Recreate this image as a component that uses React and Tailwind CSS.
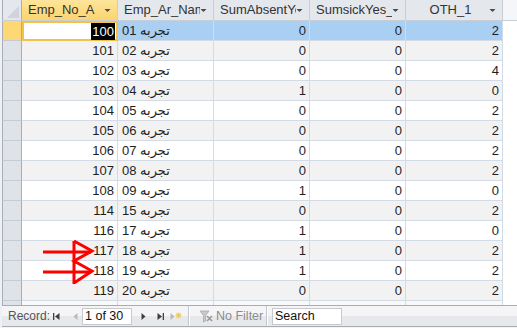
import React from "react";

const rows = [
  ["100", "01", "0", "0", "2"],
  ["101", "02", "0", "0", "2"],
  ["102", "03", "0", "0", "4"],
  ["103", "04", "1", "0", "0"],
  ["104", "05", "0", "0", "2"],
  ["105", "06", "0", "0", "2"],
  ["106", "07", "0", "0", "2"],
  ["107", "08", "0", "0", "2"],
  ["108", "09", "1", "0", "0"],
  ["114", "15", "0", "0", "2"],
  ["116", "17", "1", "0", "0"],
  ["117", "18", "1", "0", "2"],
  ["118", "19", "1", "0", "2"],
  ["119", "20", "0", "0", "2"],
];

const Arrow = () => (
  <svg width="7" height="5" viewBox="0 0 7 5" className="shrink-0">
    <path d="M0.5 1h6L3.5 4z" fill="#4a4a4a" />
  </svg>
);

const HeadCell = ({ label, w = "w-[96px]", center, active }) => (
  <div
    className={`${w} shrink-0 h-full flex items-center border-r border-[#c9ced6] pl-[6px] pr-[6px] ${
      active
        ? "bg-[linear-gradient(#fde59c,#fbd46e)]"
        : "bg-[#e4e7ec]"
    }`}
  >
    <span
      className={`flex-1 overflow-hidden whitespace-nowrap text-[#333] ${
        center ? "text-center" : ""
      }`}
    >
      {label}
    </span>
    <Arrow />
  </div>
);

const Row = ({ r, i }) => {
  const sel = i === 0;
  const bg = sel ? "bg-[#a9cff2]" : i % 2 ? "bg-[#f2f2f2]" : "bg-white";
  const cell = `w-[96px] shrink-0 h-full border-r border-b border-[#d3dbe7] ${bg} flex items-center`;
  return (
    <div className="flex h-[20px]">
      <div
        className={`w-[20px] shrink-0 h-full border-l border-r border-b border-l-[#a9aeb6] border-r-[#a9aeb6] border-b-[#c5cbd4] ${
          sel ? "bg-[#fcd974]" : "bg-[#dfe3e8]"
        }`}
      />
      {sel ? (
        <div className="w-[96px] shrink-0 h-full border-2 border-[#f3c24a] bg-white flex items-center justify-end pr-[1px]">
          <span className="bg-black text-white leading-[17px] px-[1px]">{r[0]}</span>
        </div>
      ) : (
        <div className={`${cell} justify-end pr-[3px]`}>{r[0]}</div>
      )}
      <div className={`${cell} pl-[4px]`}>
        <span dir="ltr">{`${r[1]} تجربه`}</span>
      </div>
      <div className={`${cell} justify-end pr-[3px]`}>{r[2]}</div>
      <div className={`${cell} justify-end pr-[3px]`}>{r[3]}</div>
      <div className={`${cell} w-[97px] justify-end pr-[3px]`}>{r[4]}</div>
      <div className="flex-1 h-full bg-white" />
    </div>
  );
};

export default function App() {
  return (
    <div className="relative w-[517px] h-[328px] overflow-hidden bg-[#eef0f3] pl-[2px] flex flex-col text-[13px] text-[#1e1e1e] font-['Liberation_Sans','DejaVu_Sans',sans-serif]">
      {/* header */}
      <div className="flex h-[21px] border-b border-[#c9ced6] shrink-0">
        <div className="w-[20px] shrink-0 h-full bg-[#e4e7ec] border-l border-r border-[#a9aeb6] flex items-end justify-end p-[2px]">
          <svg width="12" height="12" viewBox="0 0 12 12">
            <path d="M12 0V12H0z" fill="#d0d4da" />
          </svg>
        </div>
        <HeadCell label="Emp_No_A" active />
        <HeadCell label="Emp_Ar_Name" />
        <HeadCell label="SumAbsentYes" />
        <HeadCell label="SumsickYes_" />
        <HeadCell label="OTH_1" w="w-[97px]" center />
        <div className="flex-1 h-full bg-[#f5f6fa]" />
      </div>

      {/* body */}
      {rows.map((r, i) => (
        <Row key={r[0]} r={r} i={i} />
      ))}

      {/* filler */}
      <div className="flex h-[4px] shrink-0">
        <div className="w-[20px] shrink-0 h-full border-l border-r border-[#a9aeb6] bg-[#dfe3e8]" />
        <div className="w-[96px] shrink-0 h-full border-r border-[#d3dbe7] bg-[#f9f9f9]" />
        <div className="w-[96px] shrink-0 h-full border-r border-[#d3dbe7] bg-[#f9f9f9]" />
        <div className="w-[96px] shrink-0 h-full border-r border-[#d3dbe7] bg-[#f9f9f9]" />
        <div className="w-[96px] shrink-0 h-full border-r border-[#d3dbe7] bg-[#f9f9f9]" />
        <div className="w-[97px] shrink-0 h-full border-r border-[#d3dbe7] bg-[#f9f9f9]" />
        <div className="flex-1 h-full bg-white" />
      </div>

      {/* record navigation bar */}
      <div className="flex items-center h-[22px] shrink-0 border-y border-[#a8acb3] bg-[linear-gradient(#f5f5f7_50%,#e7e8eb_50%)] text-[12px]">
        <span className="ml-[6px] w-[45px] shrink-0 text-[#555]">Record:</span>
        <svg width="7" height="7" viewBox="0 0 7 7" className="shrink-0">
          <rect x="0" y="0" width="1.3" height="7" fill="#404040" />
          <path d="M6.5 0v7L2 3.5z" fill="#404040" />
        </svg>
        <svg width="5" height="7" viewBox="0 0 5 7" className="ml-[13px] shrink-0">
          <path d="M4.5 0v7L0.5 3.5z" fill="#b8b8b8" />
        </svg>
        <div className="ml-[4px] w-[50px] h-[17px] shrink-0 bg-white border border-[#c6c9ce] flex items-center pl-[2px] text-[#111] text-[12.5px]">
          1 of 30
        </div>
        <svg width="5" height="7" viewBox="0 0 5 7" className="ml-[9px] shrink-0">
          <path d="M0.5 0v7L4.5 3.5z" fill="#404040" />
        </svg>
        <svg width="7" height="7" viewBox="0 0 7 7" className="ml-[11px] shrink-0">
          <path d="M0.5 0v7L5 3.5z" fill="#404040" />
          <rect x="5.7" y="0" width="1.3" height="7" fill="#404040" />
        </svg>
        <svg width="12" height="9" viewBox="0 0 12 9" className="ml-[6px] shrink-0">
          <path d="M0.5 1v7L4.5 4.5z" fill="#b8b8b8" />
          <rect x="6" y="1" width="5" height="5" fill="#f3df8a" />
          <path d="M8.5 0.5v6M5.5 3.5h6M6.5 1.5l4 4M10.5 1.5l-4 4" stroke="#e8c95a" strokeWidth="0.8" />
        </svg>
        <div className="ml-[6px] w-[2px] h-full shrink-0 border-l border-[#c4c7cc] border-r-white border-r" />
        <svg width="14" height="13" viewBox="0 0 14 13" className="ml-[9px] shrink-0">
          <path d="M1 1h9L6.5 5.5V11L4.5 12V5.5z" fill="#c9c9c9" stroke="#a9a9a9" strokeWidth="0.8" />
          <path d="M8 6l5 5M13 6l-5 5" stroke="#9a9a9a" strokeWidth="1.6" />
        </svg>
        <span className="ml-[3px] w-[50px] shrink-0 text-[#8c8c8c] text-[12.5px]">No Filter</span>
        <div className="w-[2px] h-full shrink-0 border-l border-[#c4c7cc] border-r-white border-r" />
        <div className="ml-[4px] w-[70px] h-[17px] shrink-0 bg-white border border-[#c6c9ce] flex items-center pl-[2px] text-[#111] text-[12.5px]">
          Search
        </div>
      </div>
      <div className="flex-1 bg-[#f3f3f3]" />

      {/* red annotation arrows */}
      <svg
        className="absolute left-0 top-0 pointer-events-none"
        width="517"
        height="328"
        viewBox="0 0 517 328"
      >
        <g stroke="#f00" strokeWidth="3" fill="none" strokeLinejoin="miter">
          <path d="M43 252H91M43 272H91" />
          <path d="M74 241V284M74 241L92 251L74 261L92 271L74 283" />
        </g>
      </svg>
    </div>
  );
}
